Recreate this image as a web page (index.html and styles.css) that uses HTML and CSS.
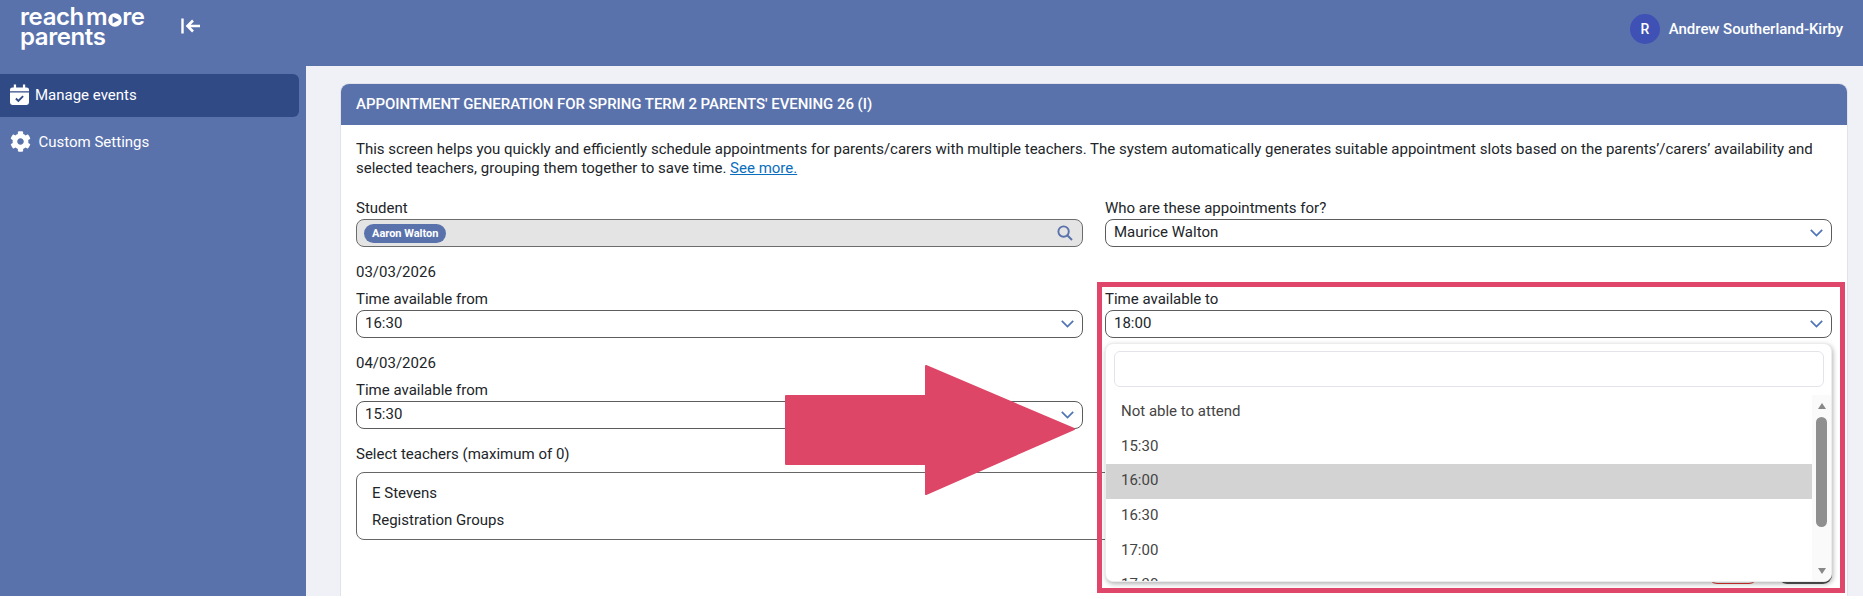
FILE: index.html
```html
<!DOCTYPE html>
<html lang="en">
<head>
<meta charset="utf-8">
<title>Appointment generation</title>
<link rel="stylesheet" href="styles.css">
</head>
<body>
<div class="app">
  <header class="topbar">
    <div class="brand">
      <div class="logo" aria-label="reach more parents">
        <div class="logo-line">reach m<svg class="logo-o" viewBox="0 0 14 14"><path d="M7 0.2a6.8 6.8 0 1 1 0 13.6a6.8 6.8 0 0 1 0-13.6zM4.6 3.4v7.2L11 7z" fill="#fff" fill-rule="evenodd"/></svg>re</div>
        <div class="logo-line">parents</div>
      </div>
      <svg class="collapse" viewBox="0 0 20 16"><path d="M1.5 0.5v15" stroke="#fff" stroke-width="2.4" fill="none"/><path d="M19 8H7M12 2.5 6.5 8l5.5 5.5" stroke="#fff" stroke-width="2.6" fill="none"/></svg>
    </div>
    <div class="user">
      <span class="avatar">R</span>
      <span class="user-name">Andrew Southerland-Kirby</span>
    </div>
  </header>
  <div class="main">
    <nav class="sidebar">
      <a class="nav-item active">
        <svg class="nav-cal" viewBox="0 0 20 22"><path d="M4 0.5h2.4v3H13.6v-3H16v3h1.5A2.5 2.5 0 0 1 20 6v1.5H0V6a2.5 2.5 0 0 1 2.5-2.5H4zM0 9h20v10.5a2.5 2.5 0 0 1-2.5 2.5h-15A2.5 2.5 0 0 1 0 19.5z" fill="#fff"/><path d="M6.2 15.2l2.6 2.5 5-5" stroke="#304a86" stroke-width="2" fill="none"/></svg>
        <span>Manage events</span>
      </a>
      <a class="nav-item">
        <svg class="nav-gear" viewBox="0 0 512 512"><path fill="#fff" d="M487.4 315.7l-42.6-24.6c4.3-23.2 4.3-47 0-70.2l42.6-24.6c4.9-2.8 7.1-8.6 5.5-14-11.1-35.6-30-67.8-54.7-94.6-3.8-4.1-10-5.1-14.8-2.3L380.8 110c-17.9-15.4-38.5-27.3-60.8-35.1V25.8c0-5.6-3.9-10.5-9.4-11.7-36.7-8.2-74.3-7.8-109.2 0-5.5 1.2-9.4 6.1-9.4 11.7V75c-22.2 7.9-42.8 19.8-60.8 35.1L88.7 85.5c-4.9-2.8-11-1.9-14.8 2.3-24.7 26.7-43.6 58.9-54.7 94.6-1.7 5.4.6 11.2 5.5 14L67.3 221c-4.3 23.2-4.3 47 0 70.2l-42.6 24.6c-4.9 2.8-7.1 8.6-5.5 14 11.1 35.6 30 67.8 54.7 94.6 3.8 4.1 10 5.1 14.8 2.3l42.6-24.6c17.9 15.4 38.5 27.3 60.8 35.1v49.2c0 5.6 3.9 10.5 9.4 11.7 36.7 8.2 74.3 7.8 109.2 0 5.5-1.2 9.4-6.1 9.4-11.7v-49.2c22.2-7.9 42.8-19.8 60.8-35.1l42.6 24.6c4.9 2.8 11 1.9 14.8-2.3 24.7-26.7 43.6-58.9 54.7-94.6 1.5-5.5-.7-11.3-5.6-14.1zM256 336c-44.1 0-80-35.9-80-80s35.9-80 80-80 80 35.9 80 80-35.9 80-80 80z"/></svg>
        <span>Custom Settings</span>
      </a>
    </nav>
    <main class="content">
      <section class="card">
        <h1 class="card-title">APPOINTMENT GENERATION FOR SPRING TERM 2 PARENTS' EVENING 26 (I)</h1>
        <div class="card-body">
          <p class="intro">This screen helps you quickly and efficiently schedule appointments for parents/carers with multiple teachers. The system automatically generates suitable appointment slots based on the parents’/carers’ availability and selected teachers, grouping them together to save time. <a class="more">See more.</a></p>
          <div class="grid first">
            <div class="field">
              <label class="label">Student</label>
              <div class="control readonly">
                <span class="chip">Aaron Walton</span>
                <svg class="search" viewBox="0 0 16 16"><circle cx="6.6" cy="6.6" r="5.2" stroke="#5a72ac" stroke-width="1.9" fill="none"/><path d="M10.5 10.5 15 15" stroke="#5a72ac" stroke-width="2" fill="none"/></svg>
              </div>
            </div>
            <div class="field">
              <label class="label">Who are these appointments for?</label>
              <div class="control"><span>Maurice Walton</span><svg class="chev" viewBox="0 0 13 8"><path d="M0.8 0.8 6.5 6.6l5.7-5.8" stroke="#4f74b8" stroke-width="1.7" fill="none"/></svg></div>
            </div>
          </div>
          <div class="date">03/03/2026</div>
          <div class="grid">
            <div class="field">
              <label class="label">Time available from</label>
              <div class="control"><span>16:30</span><svg class="chev" viewBox="0 0 13 8"><path d="M0.8 0.8 6.5 6.6l5.7-5.8" stroke="#4f74b8" stroke-width="1.7" fill="none"/></svg></div>
            </div>
            <div class="field">
              <label class="label">Time available to</label>
              <div class="control"><span>18:00</span><svg class="chev" viewBox="0 0 13 8"><path d="M0.8 0.8 6.5 6.6l5.7-5.8" stroke="#4f74b8" stroke-width="1.7" fill="none"/></svg></div>
              <div class="dropdown">
                <div class="dd-search"></div>
                <div class="dd-list">
                  <ul class="dd-options">
                    <li>Not able to attend</li>
                    <li>15:30</li>
                    <li class="hover">16:00</li>
                    <li>16:30</li>
                    <li>17:00</li>
                    <li>17:30</li>
                  </ul>
                  <div class="scroll">
                    <span class="arrow-up"></span>
                    <span class="thumb"></span>
                    <span class="arrow-down"></span>
                  </div>
                </div>
              </div>
            </div>
          </div>
          <div class="date">04/03/2026</div>
          <div class="grid">
            <div class="field">
              <label class="label">Time available from</label>
              <div class="control"><span>15:30</span><svg class="chev" viewBox="0 0 13 8"><path d="M0.8 0.8 6.5 6.6l5.7-5.8" stroke="#4f74b8" stroke-width="1.7" fill="none"/></svg></div>
            </div>
          </div>
          <div class="label teachers-label">Select teachers (maximum of 0)</div>
          <div class="teachers">
            <div class="teacher">E Stevens</div>
            <div class="teacher">Registration Groups</div>
          </div>
          <div class="actions">
            <span class="btn btn-outline"></span>
            <span class="btn btn-dark"></span>
          </div>
        </div>
      </section>
    </main>
  </div>
</div>
<div class="frame"></div>
<svg class="big-arrow" viewBox="0 0 292 132" width="292" height="132"><path d="M2 32H142V2L290 65 142 130V100H2z" fill="#de4667" stroke="#de4667" stroke-width="2" stroke-linejoin="round"/></svg>
</body>
</html>
```
FILE: styles.css
```css
* { box-sizing: border-box; }
html, body { margin: 0; padding: 0; background: #fff; }
body {
  width: 1863px;
  height: 599px;
  overflow: hidden;
  position: relative;
  font-family: Roboto, "Liberation Sans", sans-serif;
  font-size: 15px;
  line-height: 19px;
  color: #212529;
}
.app { height: 596px; display: flex; flex-direction: column; overflow: hidden; }

.topbar {
  height: 66px;
  flex: none;
  background: #5a72ac;
  display: flex;
  align-items: flex-start;
  justify-content: space-between;
  color: #fff;
}
.brand { display: flex; align-items: flex-start; padding: 7px 0 0 20px; }
.logo {
  width: 161px;
  font-family: Inter, sans-serif;
  font-weight: 600;
  font-size: 24px;
  line-height: 20px;
  letter-spacing: -0.4px;
  word-spacing: -3.5px;
  color: #fff;
}
.logo-line { display: flex; align-items: baseline; white-space: pre; height: 20px; }
.logo-o { width: 14px; height: 14px; margin: 0 0.5px; align-self: flex-end; }
.collapse { width: 20px; height: 16px; margin: 11px 0 0 0; }

.user { display: flex; align-items: center; gap: 9px; padding: 14px 20px 0 0; }
.avatar {
  width: 30px;
  height: 30px;
  border-radius: 50%;
  background: #3f51b5;
  display: flex;
  align-items: center;
  justify-content: center;
  font-weight: 500;
  font-size: 14px;
}
.user-name { font-weight: 500; letter-spacing: -0.05px; }

.main { flex: 1; min-height: 0; display: flex; background: #f0f1f6; }
.sidebar {
  width: 306px;
  flex: none;
  background: #5a72ac;
  padding-top: 8px;
  color: #fff;
}
.nav-item { display: flex; align-items: center; height: 43px; width: 299px; padding-left: 10px; margin-bottom: 4px; border-radius: 0 6px 6px 0; }
.nav-item.active { background: #304a86; gap: 6px; }
.nav-item:not(.active) { gap: 8px; }
.nav-cal { width: 19px; height: 21px; margin-top: -2px; }
.nav-gear { width: 21px; height: 23px; margin-top: -2px; margin-left: -0.5px; }

.content { flex: 1; min-width: 0; padding: 17px 15px 0 34px; overflow: hidden; }
.card { background: #fff; border: 1px solid #e1e2ea; border-radius: 9px 9px 0 0; height: 600px; }
.card-title {
  margin: 0;
  height: 41px;
  padding: 0 15px;
  display: flex;
  align-items: center;
  background: #5a72ac;
  color: #fff;
  font-size: 15px;
  font-weight: 500;
  letter-spacing: -0.05px;
  border-radius: 8px 8px 0 0;
}
.card-body { padding: 15px 15px 0; }
.intro { margin: 0 0 21px; }
.more { color: #0a6ebd; text-decoration: underline; }

.grid { display: grid; grid-template-columns: 1fr 1fr; column-gap: 22px; }
.field { position: relative; }
.label { display: block; margin-bottom: 1px; }
.control {
  height: 28px;
  border: 1px solid #5c5c5c;
  border-radius: 8px;
  display: flex;
  align-items: center;
  justify-content: space-between;
  padding: 0 8px 2px;
  background: #fff;
  margin-bottom: 15px;
}
.control.readonly { background: #e4e4e4; border-color: #6c6c6c; padding: 0 7px; }
.chev { width: 13px; height: 8px; position: relative; top: 1px; }
.chip {
  height: 19px;
  padding: 0 8px;
  display: flex;
  align-items: center;
  border-radius: 10px;
  background: #5a72ac;
  color: #fff;
  font-size: 11px;
  font-weight: 700;
}
.search { width: 16px; height: 16px; margin-right: 2px; }
.date { padding-top: 1px; margin-bottom: 8px; }
.teachers-label { padding-top: 1px; margin-bottom: 8px; }
.teachers {
  height: 68px;
  border: 1px solid #666;
  border-radius: 8px;
  padding: 7px 15px;
}
.teacher { height: 27px; display: flex; align-items: center; }
.actions { display: flex; justify-content: flex-end; gap: 20px; margin-top: 10px; }
.btn { width: 50px; height: 34px; border-radius: 9px; }
.btn-outline { border: 1px solid #e0322f; }
.btn-dark { width: 54px; background: #555; }

.dropdown {
  position: absolute;
  z-index: 5;
  left: 0;
  right: 0;
  top: 53px;
  height: 239px;
  background: #fff;
  border: 1px solid #ececec;
  border-radius: 8px;
  box-shadow: 1px 2px 5px rgba(0, 0, 0, 0.3);
  overflow: hidden;
  padding-top: 7px;
}
.dd-search { height: 36px; margin: 0 7px 0 8px; border: 1px solid #e3e3ea; border-radius: 6px; }
.dd-list { display: flex; height: 187px; margin-top: 8px; }
.dd-options {
  list-style: none;
  margin: 0;
  padding: 0;
  flex: 1;
  overflow: hidden;
  color: #444;
}
.dd-options li { height: 34.7px; padding-left: 15px; display: flex; align-items: center; padding-bottom: 2px; }
.dd-options li.hover { background: #d3d3d3; }
.scroll {
  width: 19px;
  flex: none;
  background: #fafafa;
  display: flex;
  flex-direction: column;
  align-items: center;
  padding: 8px 0;
}
.arrow-up, .arrow-down { width: 0; height: 0; border-left: 4.5px solid transparent; border-right: 4.5px solid transparent; }
.arrow-up { border-bottom: 6px solid #888; }
.arrow-down { border-top: 6px solid #888; margin-top: auto; }
.thumb { width: 11px; height: 110px; margin-top: 8px; border-radius: 6px; background: #8f8f8f; }

.frame {
  position: absolute;
  left: 1097px;
  top: 282px;
  width: 748px;
  height: 311px;
  border: 5px solid #e04669;
  z-index: 8;
  pointer-events: none;
}
.big-arrow { position: absolute; left: 784px; top: 364px; z-index: 9; }
```
